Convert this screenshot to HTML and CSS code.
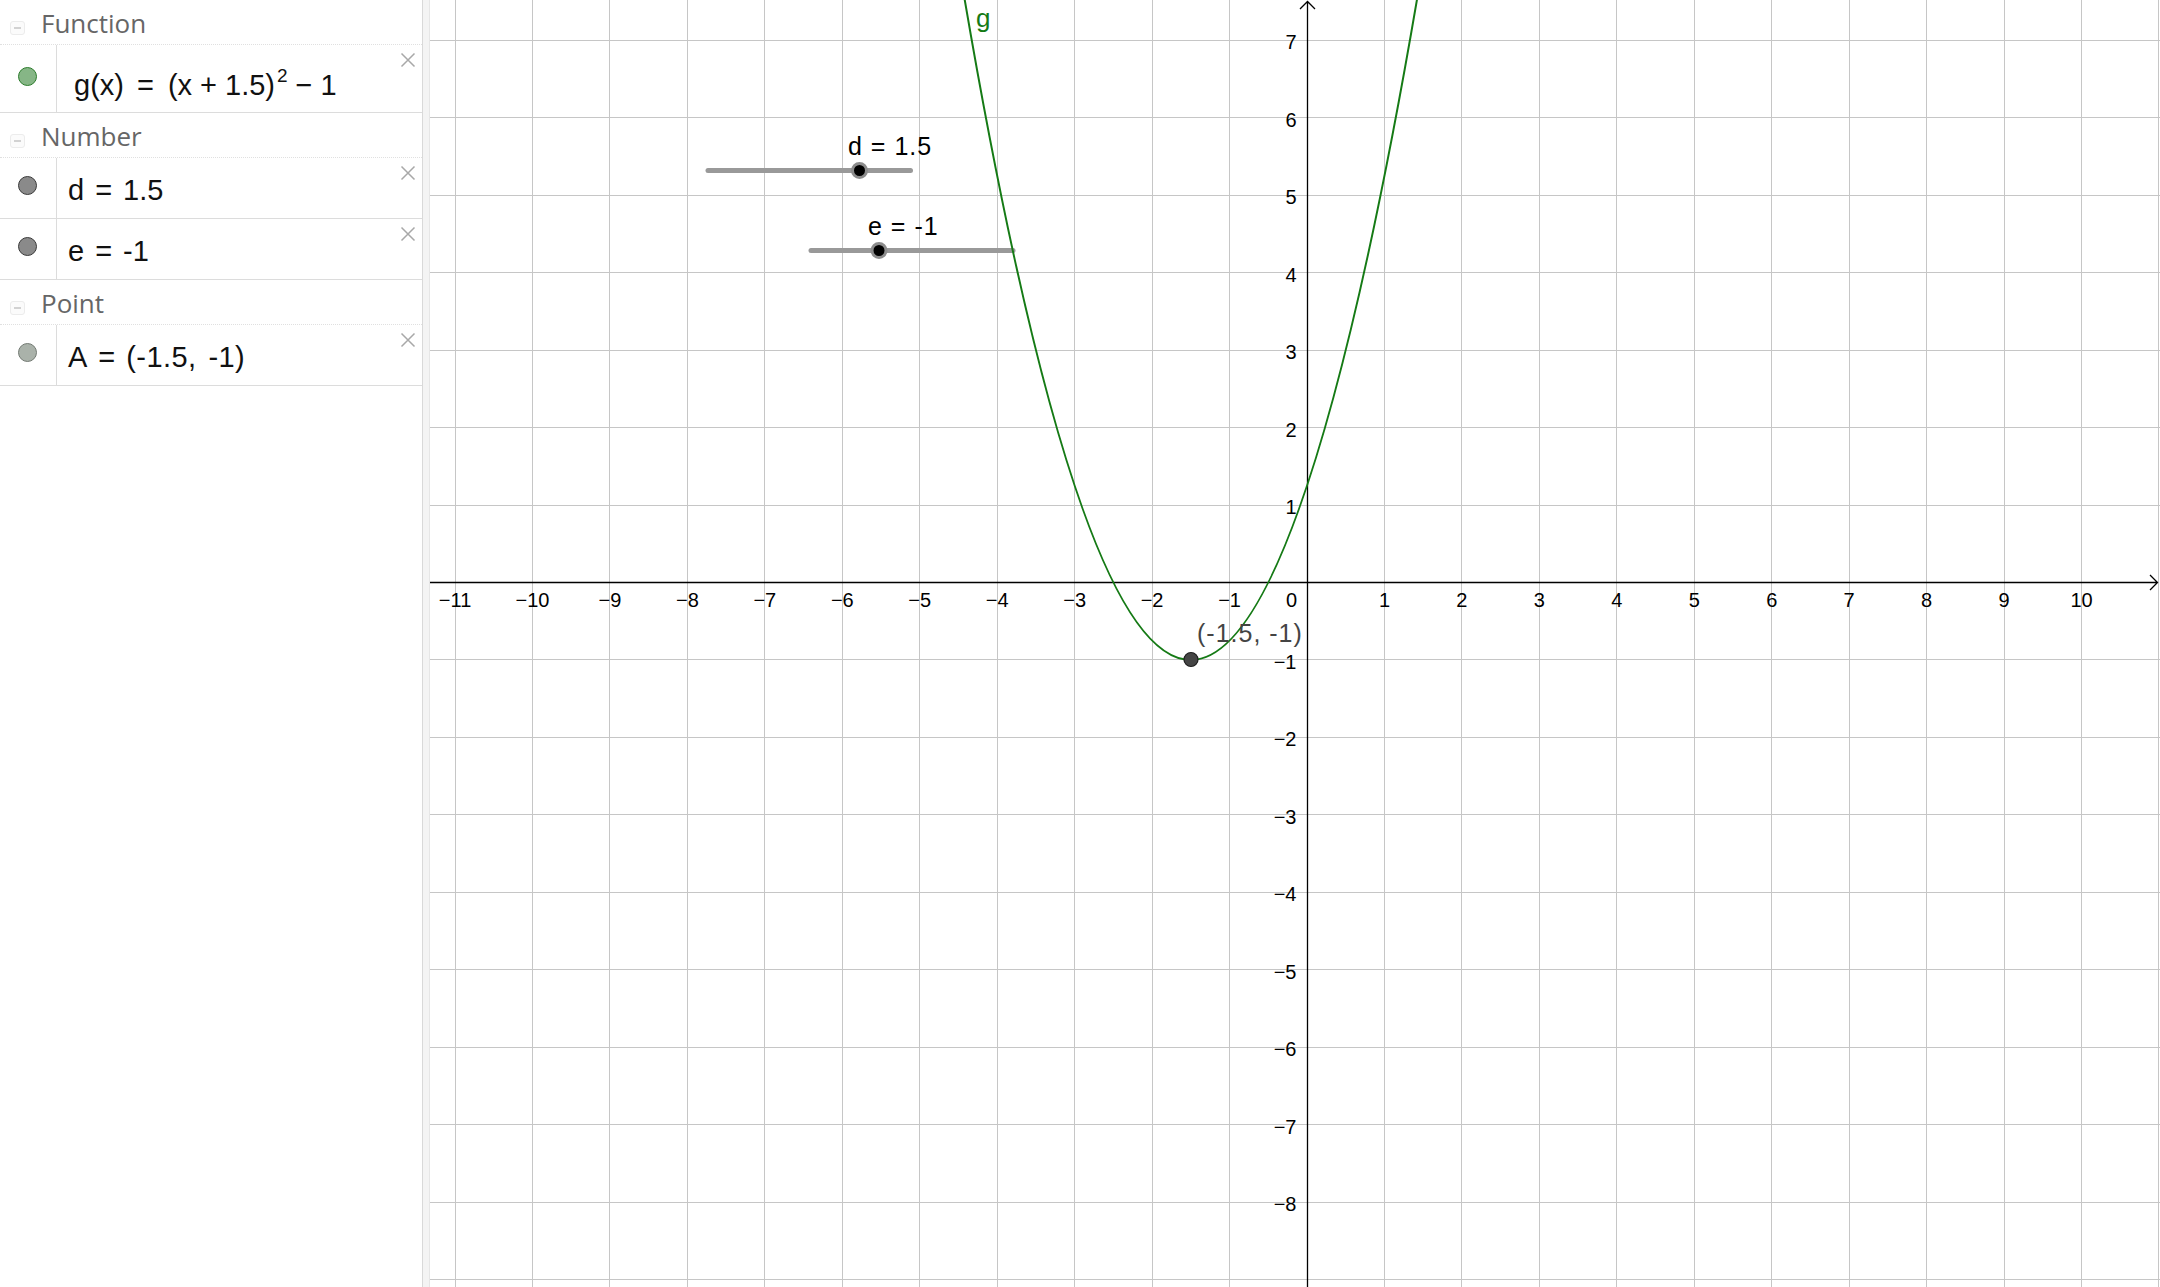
FILE: index.html
```html
<!DOCTYPE html>
<html lang="en">
<head>
<meta charset="utf-8">
<title>Graphing</title>
<link rel="stylesheet" href="styles.css">
</head>
<body>
<div class="app">
  <aside class="algebra">
    <div class="group-header"><span class="collapse"></span><span class="group-title">Function</span></div>
    <div class="item item-tall">
      <div class="item-marker"><span class="marble marble-green"></span></div>
      <div class="item-body"><span>g(x)</span><span class="rel">=</span><span>(x</span><span class="bin">+</span><span>1.5)</span><span class="sup">2</span><span class="bin">−</span><span>1</span></div>
      <span class="item-close"><svg viewBox="0 0 16 16" width="16" height="16"><path d="M1.5 1.5L14.5 14.5M14.5 1.5L1.5 14.5"/></svg></span>
    </div>
    <div class="group-header"><span class="collapse"></span><span class="group-title">Number</span></div>
    <div class="item">
      <div class="item-marker"><span class="marble marble-gray"></span></div>
      <div class="item-body"><span>d</span><span class="rel">=</span><span>1.5</span></div>
      <span class="item-close"><svg viewBox="0 0 16 16" width="16" height="16"><path d="M1.5 1.5L14.5 14.5M14.5 1.5L1.5 14.5"/></svg></span>
    </div>
    <div class="item">
      <div class="item-marker"><span class="marble marble-gray"></span></div>
      <div class="item-body"><span>e</span><span class="rel">=</span><span>-1</span></div>
      <span class="item-close"><svg viewBox="0 0 16 16" width="16" height="16"><path d="M1.5 1.5L14.5 14.5M14.5 1.5L1.5 14.5"/></svg></span>
    </div>
    <div class="group-header"><span class="collapse"></span><span class="group-title">Point</span></div>
    <div class="item">
      <div class="item-marker"><span class="marble marble-point"></span></div>
      <div class="item-body"><span>A</span><span class="rel">=</span><span class="tuple">(-1.5,</span><span class="tuple comma-gap">-1)</span></div>
      <span class="item-close"><svg viewBox="0 0 16 16" width="16" height="16"><path d="M1.5 1.5L14.5 14.5M14.5 1.5L1.5 14.5"/></svg></span>
    </div>
  </aside>
  <div class="splitter"></div>
  <main class="graphics">
    <svg class="canvas" width="1730" height="1287" viewBox="0 0 1730 1287">
      <path class="grid" d="M25.5 0V1287M102.5 0V1287M179.5 0V1287M257.5 0V1287M334.5 0V1287M412.5 0V1287M489.5 0V1287M567.5 0V1287M644.5 0V1287M722.5 0V1287M799.5 0V1287M954.5 0V1287M1031.5 0V1287M1109.5 0V1287M1186.5 0V1287M1264.5 0V1287M1341.5 0V1287M1419.5 0V1287M1496.5 0V1287M1574.5 0V1287M1651.5 0V1287M1728.5 0V1287M0 40.5H1730M0 117.5H1730M0 195.5H1730M0 272.5H1730M0 350.5H1730M0 427.5H1730M0 505.5H1730M0 659.5H1730M0 737.5H1730M0 814.5H1730M0 892.5H1730M0 969.5H1730M0 1047.5H1730M0 1124.5H1730M0 1202.5H1730M0 1279.5H1730"/>
      <path class="axis" d="M0 582.5H1727M877.5 2V1287M1720 575L1727.5 582.5L1720 590M870 9L877.5 1.5L885 9"/>
      <g class="xnums">
        <text x="25.05" y="607">−11</text>
        <text x="102.5" y="607">−10</text>
        <text x="179.95" y="607">−9</text>
        <text x="257.4" y="607">−8</text>
        <text x="334.85" y="607">−7</text>
        <text x="412.3" y="607">−6</text>
        <text x="489.75" y="607">−5</text>
        <text x="567.2" y="607">−4</text>
        <text x="644.65" y="607">−3</text>
        <text x="722.1" y="607">−2</text>
        <text x="799.55" y="607">−1</text>
        <text x="954.45" y="607">1</text>
        <text x="1031.9" y="607">2</text>
        <text x="1109.35" y="607">3</text>
        <text x="1186.8" y="607">4</text>
        <text x="1264.25" y="607">5</text>
        <text x="1341.7" y="607">6</text>
        <text x="1419.15" y="607">7</text>
        <text x="1496.6" y="607">8</text>
        <text x="1574.05" y="607">9</text>
        <text x="1651.5" y="607">10</text>
      </g>
      <g class="ynums">
        <text x="866.5" y="49.4">7</text>
        <text x="866.5" y="126.8">6</text>
        <text x="866.5" y="204.3">5</text>
        <text x="866.5" y="281.7">4</text>
        <text x="866.5" y="359.2">3</text>
        <text x="866.5" y="436.6">2</text>
        <text x="866.5" y="514.1">1</text>
        <text x="867" y="607">0</text>
        <text x="866.5" y="669">−1</text>
        <text x="866.5" y="746.4">−2</text>
        <text x="866.5" y="823.9">−3</text>
        <text x="866.5" y="901.3">−4</text>
        <text x="866.5" y="978.8">−5</text>
        <text x="866.5" y="1056.2">−6</text>
        <text x="866.5" y="1133.7">−7</text>
        <text x="866.5" y="1211.1">−8</text>
      </g>
      <g class="slider">
        <line class="slider-track" x1="278" y1="170.5" x2="480.5" y2="170.5"/>
        <circle class="slider-knob" cx="429.5" cy="170.5" r="7"/>
        <text class="obj-label" x="418" y="155">d = 1.5</text>
      </g>
      <g class="slider">
        <line class="slider-track" x1="381" y1="250.5" x2="583" y2="250.5"/>
        <circle class="slider-knob" cx="449" cy="250.5" r="7"/>
        <text class="obj-label" x="438" y="235">e = -1</text>
      </g>
      <path class="curve" d="M528.48 -37.1 Q760.83 1357 993.18 -37.1"/>
      <text class="curve-label" x="546" y="27">g</text>
      <circle class="point" cx="761" cy="659.5" r="7"/>
      <text class="point-label" x="767" y="642">(-1.5, -1)</text>
    </svg>
  </main>
</div>
</body>
</html>
```

FILE: styles.css
```css
* {
  box-sizing: border-box;
}

html,
body {
  margin: 0;
  padding: 0;
  background: #ffffff;
}

body {
  width: 2160px;
  height: 1287px;
  overflow: hidden;
  font-family: "Liberation Sans", Arial, sans-serif;
}

.app {
  display: flex;
  width: 2160px;
  height: 1287px;
}

/* ---------- Algebra view ---------- */
.algebra {
  width: 422px;
  flex: none;
  background: #ffffff;
}

.group-header {
  height: 45px;
  display: flex;
  align-items: flex-start;
  padding-left: 10px;
  border-bottom: 1px dotted #e0e0e0;
}

.collapse {
  width: 15px;
  height: 14px;
  margin-top: 21px;
  border: 1px solid #ececec;
  border-radius: 3px;
  background: #fbfbfb;
  display: flex;
  align-items: center;
  justify-content: center;
}

.collapse::before {
  content: "";
  width: 7px;
  height: 2px;
  background: #d2d2d2;
}

.group-title {
  margin-left: 16px;
  font-family: "Open Sans", "Noto Sans", sans-serif;
  font-size: 26px;
  line-height: 46px;
  color: #666666;
  white-space: nowrap;
}

.item {
  display: flex;
  height: 61px;
  border-bottom: 1px solid #dcdcdc;
}

.item-tall {
  height: 68px;
}

.item-marker {
  width: 57px;
  flex: none;
  border-right: 1px solid #dcdcdc;
  padding: 18px 0 0 18px;
}

.item-tall .item-marker {
  padding-top: 22px;
}

.marble {
  display: block;
  width: 19px;
  height: 19px;
  border-radius: 50%;
  border: 1px solid #333333;
}

.marble-green {
  background: #86b686;
  border-color: #2c7c2c;
}

.marble-gray {
  background: #8a8a8a;
  border-color: #3a3a3a;
}

.marble-point {
  background: #aab2aa;
  border-color: #737a73;
}

.item-body {
  flex: 1;
  padding: 16px 0 0 11px;
  font-family: "Liberation Sans", Arial, sans-serif;
  font-size: 29px;
  line-height: 32px;
  color: #111111;
  white-space: nowrap;
}

.item-tall .item-body {
  padding-top: 24px;
  padding-left: 17px;
}

.rel {
  margin: 0 11px;
}

.item-tall .rel {
  margin: 0 14px 0 13px;
}

.bin {
  margin: 0 8px;
}

.sup {
  font-size: 19px;
  line-height: 0;
  vertical-align: 13px;
  margin-left: 2px;
}

.tuple {
  letter-spacing: 0.4px;
}

.comma-gap {
  margin-left: 12px;
}

.item-close {
  flex: none;
  width: 16px;
  height: 16px;
  margin: 7px 6px 0 0;
}

.item-close svg {
  display: block;
}

.item-close path {
  fill: none;
  stroke: #a8a8a8;
  stroke-width: 1.5;
}

/* ---------- Splitter ---------- */
.splitter {
  width: 8px;
  flex: none;
  background: #f4f4f4;
  border-left: 1px solid #d9d9d9;
  border-right: 1px solid #e6e6e6;
}

/* ---------- Graphics view ---------- */
.graphics {
  flex: 1;
  overflow: hidden;
  background: #ffffff;
}

.canvas {
  display: block;
  font-family: "Liberation Sans", Arial, sans-serif;
}

.grid {
  fill: none;
  stroke: #c6c6c6;
  stroke-width: 1;
}

.axis {
  fill: none;
  stroke: #000000;
  stroke-width: 1.3;
}

.xnums text {
  font-size: 20px;
  fill: #000000;
  text-anchor: middle;
}

.ynums text {
  font-size: 20px;
  fill: #000000;
  text-anchor: end;
}

.slider-track {
  stroke: #999999;
  stroke-width: 5;
  stroke-linecap: round;
}

.slider-knob {
  fill: #000000;
  stroke: #8c8c8c;
  stroke-width: 3;
}

.obj-label {
  font-size: 25px;
  letter-spacing: 1px;
  fill: #000000;
}

.curve {
  fill: none;
  stroke: #157a15;
  stroke-width: 2;
}

.curve-label {
  font-size: 26px;
  fill: #157a15;
}

.point {
  fill: #454545;
  stroke: #1e1e1e;
  stroke-width: 1.2;
}

.point-label {
  font-size: 25px;
  letter-spacing: 1px;
  fill: #444444;
}
```
